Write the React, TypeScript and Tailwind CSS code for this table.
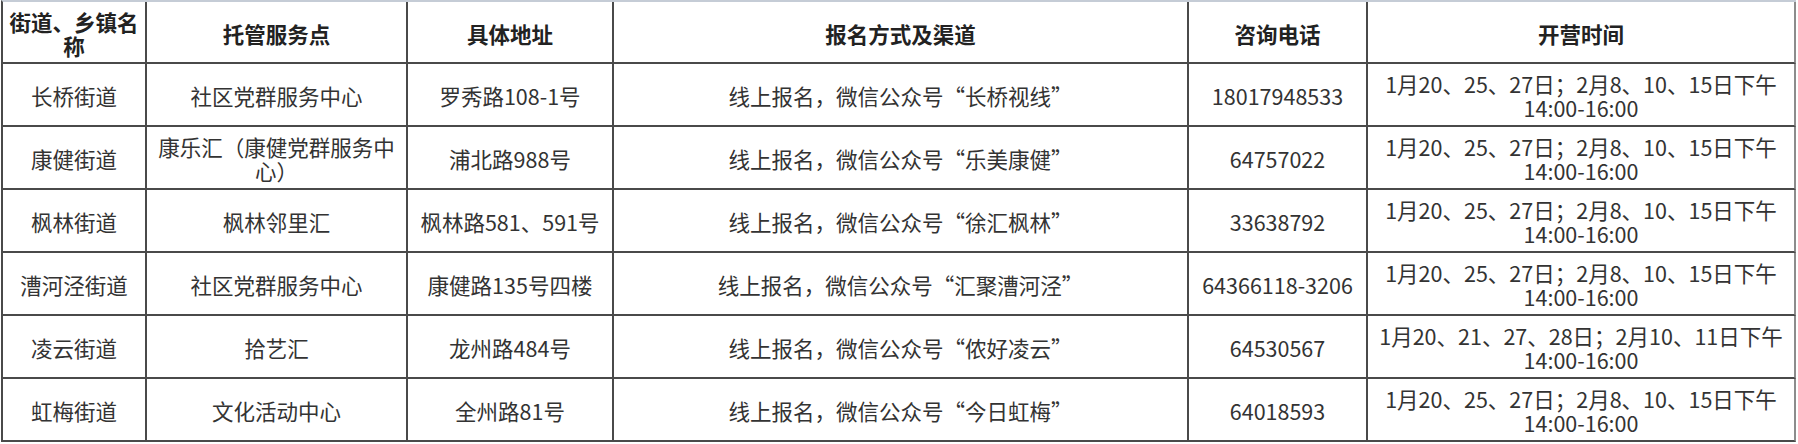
import React from "react";

// Column widths include the 2px right border of each cell
const COLS = "grid-cols-[144px_261px_206px_575px_179px_428px]";

interface Row {
    street: string;
    site: React.ReactNode;
    address: string;
    channel: string;
    phone: string;
    hours: string;
}

const rows: Row[] = [
    { street: "长桥街道", site: "社区党群服务中心", address: "罗秀路108-1号", channel: "线上报名，微信公众号“长桥视线”", phone: "18017948533", hours: "1月20、25、27日；2月8、10、15日下午" },
    { street: "康健街道", site: <>康乐汇（康健党群服务中<br />心）</>, address: "浦北路988号", channel: "线上报名，微信公众号“乐美康健”", phone: "64757022", hours: "1月20、25、27日；2月8、10、15日下午" },
    { street: "枫林街道", site: "枫林邻里汇", address: "枫林路581、591号", channel: "线上报名，微信公众号“徐汇枫林”", phone: "33638792", hours: "1月20、25、27日；2月8、10、15日下午" },
    { street: "漕河泾街道", site: "社区党群服务中心", address: "康健路135号四楼", channel: "线上报名，微信公众号“汇聚漕河泾”", phone: "64366118-3206", hours: "1月20、25、27日；2月8、10、15日下午" },
    { street: "凌云街道", site: "拾艺汇", address: "龙州路484号", channel: "线上报名，微信公众号“侬好凌云”", phone: "64530567", hours: "1月20、21、27、28日；2月10、11日下午" },
    { street: "虹梅街道", site: "文化活动中心", address: "全州路81号", channel: "线上报名，微信公众号“今日虹梅”", phone: "64018593", hours: "1月20、25、27日；2月8、10、15日下午" },
];

function Cell({ children, last, header }: { children: React.ReactNode; last?: boolean; header?: boolean }) {
    return (
        <div
            className={
                "flex items-center justify-center text-center border-b-2 border-r-2 border-b-[#4a4a4a] " +
                (last ? "border-r-[#8c8c8c] " : "border-r-[#4a4a4a] ") +
                (header ? "h-[62px] font-bold text-[#222]" : "h-[63px] text-[#333]")
            }
        >
            <div className="pt-[3px]">{children}</div>
        </div>
    );
}

export default function App() {
    return (
        <div className="w-[1798px] h-[444px] bg-white overflow-hidden font-['Noto_Sans_CJK_SC',sans-serif] text-[21.5px] leading-[24px]">
            <div className={"ml-[1px] grid w-fit border-l-2 border-l-[#4a4a4a] border-t-2 border-t-[#c5ccd6] " + COLS}>
                <Cell header>街道、乡镇名<br />称</Cell>
                <Cell header>托管服务点</Cell>
                <Cell header>具体地址</Cell>
                <Cell header>报名方式及渠道</Cell>
                <Cell header>咨询电话</Cell>
                <Cell header last>开营时间</Cell>
                {rows.map((r) => (
                    <React.Fragment key={r.street}>
                        <Cell>{r.street}</Cell>
                        <Cell>{r.site}</Cell>
                        <Cell>{r.address}</Cell>
                        <Cell>{r.channel}</Cell>
                        <Cell>{r.phone}</Cell>
                        <Cell last>
                            {r.hours}
                            <br />
                            14:00-16:00
                        </Cell>
                    </React.Fragment>
                ))}
            </div>
        </div>
    );
}
